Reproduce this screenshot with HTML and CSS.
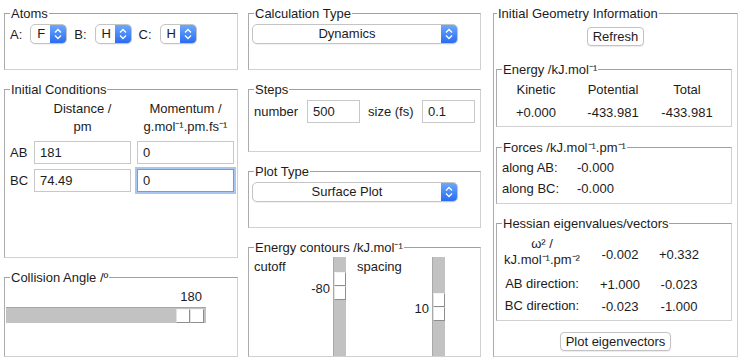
FILE: index.html
```html
<!doctype html>
<html lang="en">
  <head>
    <meta charset="UTF-8" />
    <title>LEPS Triatomic Dynamics</title>
    <link rel="stylesheet" href="styles.css">
  </head>
  <body>
    <div class="app">
      <!-- Columna izquierda -->
      <div class="col col-left">
        <fieldset class="box atoms">
          <legend>Atoms</legend>
          <div class="row">
            <span class="atom-label">A:</span>
            <div class="select atom-select"><span class="select-val">F</span><span class="select-arrows"><svg viewBox="0 0 16 18" width="16" height="18"><path d="M5 7.5 L8 4.5 L11 7.5 M5 10.5 L8 13.5 L11 10.5" fill="none" stroke="#fff" stroke-width="1.3"/></svg></span></div>
            <span class="atom-label">B:</span>
            <div class="select atom-select"><span class="select-val">H</span><span class="select-arrows"><svg viewBox="0 0 16 18" width="16" height="18"><path d="M5 7.5 L8 4.5 L11 7.5 M5 10.5 L8 13.5 L11 10.5" fill="none" stroke="#fff" stroke-width="1.3"/></svg></span></div>
            <span class="atom-label">C:</span>
            <div class="select atom-select"><span class="select-val">H</span><span class="select-arrows"><svg viewBox="0 0 16 18" width="16" height="18"><path d="M5 7.5 L8 4.5 L11 7.5 M5 10.5 L8 13.5 L11 10.5" fill="none" stroke="#fff" stroke-width="1.3"/></svg></span></div>
          </div>
        </fieldset>

        <fieldset class="box initial">
          <legend>Initial Conditions</legend>
          <div class="ic-grid">
            <span></span>
            <span class="ic-head">Distance /<br>pm</span>
            <span class="ic-head">Momentum /<br>g.mol⁻¹.pm.fs⁻¹</span>
            <span class="ic-label">AB</span>
            <input class="field" type="text" value="181">
            <input class="field" type="text" value="0">
            <span class="ic-label">BC</span>
            <input class="field" type="text" value="74.49">
            <input class="field focused" type="text" value="0">
          </div>
        </fieldset>

        <fieldset class="box angle">
          <legend>Collision Angle /º</legend>
          <div class="angle-val">180</div>
          <div class="htrack">
            <div class="hthumb"><span class="cell"></span><span class="cell"></span></div>
          </div>
        </fieldset>
      </div>

      <!-- Columna central -->
      <div class="col col-mid">
        <fieldset class="box calc">
          <legend>Calculation Type</legend>
          <div class="select wide-select"><span class="select-val">Dynamics</span><span class="select-arrows"><svg viewBox="0 0 16 18" width="16" height="18"><path d="M5 7.5 L8 4.5 L11 7.5 M5 10.5 L8 13.5 L11 10.5" fill="none" stroke="#fff" stroke-width="1.3"/></svg></span></div>
        </fieldset>

        <fieldset class="box steps">
          <legend>Steps</legend>
          <div class="row">
            <span class="steps-label">number</span>
            <input class="field small" type="text" value="500">
            <span class="steps-label size">size (fs)</span>
            <input class="field small" type="text" value="0.1">
          </div>
        </fieldset>

        <fieldset class="box plot">
          <legend>Plot Type</legend>
          <div class="select wide-select"><span class="select-val">Surface Plot</span><span class="select-arrows"><svg viewBox="0 0 16 18" width="16" height="18"><path d="M5 7.5 L8 4.5 L11 7.5 M5 10.5 L8 13.5 L11 10.5" fill="none" stroke="#fff" stroke-width="1.3"/></svg></span></div>
        </fieldset>

        <fieldset class="box contours">
          <legend>Energy contours /kJ.mol⁻¹</legend>
          <div class="ct-row">
            <div class="ct-col cutoff">
              <span class="ct-name">cutoff</span>
              <span class="ct-val">-80</span>
            </div>
            <div class="vtrack"><div class="vthumb cutoff-thumb"><span class="cell"></span><span class="cell"></span></div></div>
            <div class="ct-col spacing">
              <span class="ct-name">spacing</span>
              <span class="ct-val">10</span>
            </div>
            <div class="vtrack"><div class="vthumb spacing-thumb"><span class="cell"></span><span class="cell"></span></div></div>
          </div>
        </fieldset>
      </div>

      <!-- Columna derecha -->
      <div class="col col-right">
        <fieldset class="box geometry">
          <legend>Initial Geometry Information</legend>
          <button class="btn refresh">Refresh</button>

          <fieldset class="box energy">
            <legend>Energy /kJ.mol⁻¹</legend>
            <div class="egrid">
              <span>Kinetic</span><span>Potential</span><span>Total</span>
              <span>+0.000</span><span>-433.981</span><span>-433.981</span>
            </div>
          </fieldset>

          <fieldset class="box forces">
            <legend>Forces /kJ.mol⁻¹.pm⁻¹</legend>
            <div class="fgrid">
              <span>along AB:</span><span>-0.000</span>
              <span>along BC:</span><span>-0.000</span>
            </div>
          </fieldset>

          <fieldset class="box hessian">
            <legend>Hessian eigenvalues/vectors</legend>
            <div class="hgrid">
              <span class="omega">ω² /<br>kJ.mol⁻¹.pm⁻²</span><span>-0.002</span><span>+0.332</span>
              <span class="dir">AB direction:</span><span>+1.000</span><span>-0.023</span>
              <span class="dir">BC direction:</span><span>-0.023</span><span>-1.000</span>
            </div>
          </fieldset>

          <button class="btn plot-btn">Plot eigenvectors</button>
        </fieldset>
      </div>
    </div>
  </body>
</html>
```

FILE: styles.css
```css
/* Reset */
* {
  margin: 0;
  padding: 0;
  box-sizing: border-box;
}

body {
  font-family: "Liberation Sans", Arial, sans-serif;
  font-size: 13px;
  color: #1c1c1c;
  background: #fff;
  overflow: hidden;
}

.app {
  display: flex;
  gap: 10px;
  padding: 6px 4px 0;
}

.col {
  display: flex;
  flex-direction: column;
  gap: 12px;
}

.col-left { width: 234px; }
.col-mid { width: 233px; }
.col-right { width: 245px; margin-left: 2px; }

/* Fieldsets */
.box {
  border: 1px solid #d0d0d0;
  border-top-color: #a0a0a0;
  border-left-color: #ababab;
  padding: 3px 5px;
  min-width: 0;
}

legend {
  padding: 0 1px;
  line-height: 15px;
}

.atoms { height: 64px; }
.initial { height: 176px; }
.angle { height: 87px; padding: 3px 1px; }
.angle legend { margin-left: 4px; }
.calc { height: 64px; padding: 3px 3px; }
.calc legend, .plot legend { margin-left: 2px; }
.steps { height: 70px; }
.plot { height: 64px; padding: 3px 3px; }
.contours { height: 117px; padding: 2px 3px 0 5px; }
.geometry {
  height: 351px;
  padding: 3px 5px 0 2px;
  display: flex;
  flex-direction: column;
}
.geometry > legend { margin-left: 1px; }

.row {
  display: flex;
  align-items: center;
}

/* Selects */
.select {
  display: flex;
  height: 20px;
  border: 1px solid #c4c4c4;
  border-radius: 5px;
  overflow: hidden;
  background: #fff;
  box-shadow: 0 1px 1px rgba(0,0,0,0.06);
}

.select-val {
  flex: 1;
  line-height: 18px;
  font-size: 13px;
}

.select-arrows {
  width: 16px;
  background: linear-gradient(#6ca8fc, #2a6cf2);
  display: flex;
  align-items: center;
  justify-content: center;
}

.atom-label { margin-right: 8px; }

.atom-select {
  width: 37px;
  margin-right: 7px;
}

.atom-select .select-val { padding-left: 6px; }

.wide-select { width: 206px; }
.wide-select .select-val { text-align: center; }

/* Inputs */
.field {
  font: inherit;
  color: #1c1c1c;
  height: 23px;
  border: 1px solid #c8c8c8;
  padding: 0 5px;
  background: #fff;
  outline: none;
  width: 100%;
}

.field.focused {
  border-color: #6d9de9;
  box-shadow: 0 0 0 2px #a9c6f3;
}

.field.small { width: 53px; }

/* Initial conditions */
.ic-grid {
  display: grid;
  grid-template-columns: 18px 97px 97px;
  column-gap: 6px;
  row-gap: 5px;
  align-items: center;
}

.ic-head {
  text-align: center;
  line-height: 18px;
}

/* Collision angle */
.angle-val {
  text-align: right;
  padding-right: 4px;
  line-height: 18px;
  width: 200px;
}

.htrack {
  width: 200px;
  height: 16px;
  margin-top: 1px;
  background: #c2c2c2;
  border-top: 1px solid #a6a6a6;
  display: flex;
  justify-content: flex-end;
  align-items: center;
  padding-right: 2px;
}

.hthumb {
  width: 28px;
  height: 14px;
  display: flex;
}

.cell {
  flex: 1;
  background: #fff;
  border: 1px solid;
  border-color: #f4f4f4 #8e8e8e #8e8e8e #e2e2e2;
}

/* Steps */
.steps-label { width: 54px; }
.steps-label.size { margin-left: 8px; width: 55px; }

/* Energy contours */
.ct-row {
  display: flex;
}

.ct-col {
  display: flex;
  flex-direction: column;
}

.ct-col.cutoff { width: 79px; }
.ct-col.spacing { width: 75px; margin-left: 11px; }

.ct-name {
  line-height: 20px;
  align-self: flex-start;
}

.ct-val {
  align-self: flex-end;
  margin-right: 3px;
  line-height: 16px;
}

.cutoff .ct-val { margin-top: 4px; }
.spacing .ct-val { margin-top: 24px; }

.vtrack {
  width: 13px;
  height: 99px;
  background: #c2c2c2;
  border-left: 1px solid #a9a9a9;
  display: flex;
  flex-direction: column;
}

.vthumb {
  height: 28px;
  display: flex;
  flex-direction: column;
}

.cutoff-thumb { margin-top: 15px; }
.spacing-thumb { margin-top: 36px; }

/* Right panel */
.btn {
  font: inherit;
  color: #1c1c1c;
  background: #fff;
  border: 1px solid #c2c2c2;
  border-radius: 4px;
  height: 19px;
  line-height: 16px;
  padding: 0 5px;
  align-self: center;
  box-shadow: 0 1px 1px rgba(0,0,0,0.08);
}

.refresh { margin-top: 3px; margin-left: 3px; }
.plot-btn { margin-top: 11px; margin-left: 3px; }

.energy {
  height: 65px;
  margin-top: 16px;
  padding: 4px 0 0 1px;
}

.energy legend { margin-left: 4px; }

.egrid {
  display: grid;
  grid-template-columns: 76px 78px 70px;
  justify-items: center;
  line-height: 18px;
  row-gap: 5px;
}

.forces {
  height: 64px;
  margin-top: 13px;
  padding: 2px 5px;
}

.fgrid {
  display: grid;
  grid-template-columns: 75px auto;
  line-height: 21px;
}

.hessian {
  height: 105px;
  margin-top: 12px;
  padding: 5px 0 0 3px;
}

.hessian legend { margin-left: 2px; }

.hgrid {
  display: grid;
  grid-template-columns: 84px 72px 46px;
  justify-items: center;
  align-items: center;
}

.omega {
  text-align: center;
  line-height: 16px;
  padding-bottom: 5px;
}

.dir { line-height: 22px; }
```
